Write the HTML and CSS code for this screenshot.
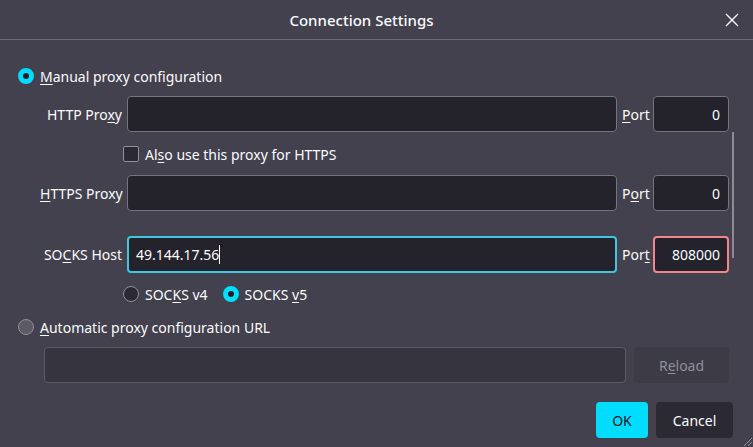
FILE: index.html
```html
<!DOCTYPE html>
<html lang="en">
<head>
    <meta charset="UTF-8">
    <title>Connection Settings</title>
    <link rel="stylesheet" href="styles.css">
</head>
<body>
    <div class="dialog">
        <header class="dialog-header">
            <div class="dialog-title">Connection Settings</div>
            <button class="close-btn" aria-label="Close">
                <svg width="14" height="14" viewBox="0 0 14 14">
                    <path d="M1 1 L13 13 M13 1 L1 13" stroke="#fbfbfe" stroke-width="1.4" fill="none"/>
                </svg>
            </button>
        </header>

        <main class="content">
            <label class="radio-row manual">
                <span class="radio checked"></span>
                <span><u>M</u>anual proxy configuration</span>
            </label>

            <div class="proxy-row http">
                <span class="field-label">HTTP Pro<u>x</u>y</span>
                <div class="field"></div>
                <span class="port-label"><u>P</u>ort</span>
                <div class="field port">0</div>
            </div>

            <label class="check-row">
                <span class="checkbox"></span>
                <span>Al<u>s</u>o use this proxy for HTTPS</span>
            </label>

            <div class="proxy-row https">
                <span class="field-label"><u>H</u>TTPS Proxy</span>
                <div class="field"></div>
                <span class="port-label">P<u>o</u>rt</span>
                <div class="field port">0</div>
            </div>

            <div class="proxy-row socks">
                <span class="field-label">SO<u>C</u>KS Host</span>
                <div class="field focused"><span>49.144.17.56</span><span class="caret"></span></div>
                <span class="port-label">Por<u>t</u></span>
                <div class="field port invalid">808000</div>
            </div>

            <div class="version-row">
                <label class="radio-row">
                    <span class="radio"></span>
                    <span>SOC<u>K</u>S v4</span>
                </label>
                <label class="radio-row">
                    <span class="radio checked"></span>
                    <span>SOCKS <u>v</u>5</span>
                </label>
            </div>

            <label class="radio-row auto">
                <span class="radio hover"></span>
                <span><u>A</u>utomatic proxy configuration URL</span>
            </label>

            <div class="url-row">
                <div class="field disabled"></div>
                <button class="btn reload">R<u>e</u>load</button>
            </div>

            <div class="dialog-buttons">
                <button class="btn primary">OK</button>
                <button class="btn">Cancel</button>
            </div>
        </main>

        <div class="scroll-thumb"></div>
        <svg class="resizer" width="12" height="12" viewBox="0 0 12 12">
            <path d="M11 3 L3 11 M11 7 L7 11" stroke="#8f8f9d" stroke-width="1" fill="none"/>
        </svg>
    </div>
</body>
</html>
```

FILE: styles.css
```css
body {
    margin: 0;
    background-color: #42414d;
    color: #fbfbfe;
    font-family: "Noto Sans", "Open Sans", sans-serif;
    font-size: 14px;
    overflow: hidden;
}

.dialog {
    position: relative;
    width: 753px;
    height: 447px;
}

.dialog-header {
    display: flex;
    align-items: center;
    height: 39px;
    padding: 0 6px;
    border-bottom: 1px solid #6b6a76;
}

.dialog-title {
    flex: 1;
    text-align: center;
    font-size: 15px;
    font-weight: 500;
}

.close-btn {
    width: 30px;
    height: 30px;
    display: flex;
    align-items: center;
    justify-content: center;
    background: none;
    border: none;
    padding: 0;
}

.content {
    padding: 0 24px 0 18px;
}

u {
    text-underline-offset: 2px;
}

.radio-row {
    display: flex;
    align-items: center;
    gap: 6px;
    height: 20px;
}

.radio-row.manual {
    margin-top: 26px;
}

.radio {
    width: 16px;
    height: 16px;
    box-sizing: border-box;
    border-radius: 50%;
    background-color: #2b2a33;
    border: 1px solid #8f8f9d;
}

.radio.checked {
    background-color: #1c1b22;
    border: 5px solid #00ddff;
}

.radio.hover {
    background-color: #5b5a65;
}

.proxy-row {
    display: grid;
    grid-template-columns: 82px 1fr 26px 76px;
    column-gap: 5px;
    align-items: center;
    margin-left: 22px;
    height: 36px;
}

.proxy-row.http {
    margin-top: 10px;
}

.proxy-row.https {
    margin-top: 11px;
}

.proxy-row.socks {
    margin-top: 25px;
}

.field-label {
    text-align: right;
    white-space: nowrap;
}

.port-label {
    white-space: nowrap;
    margin-right: -1px;
}

.field {
    box-sizing: border-box;
    height: 36px;
    display: flex;
    align-items: center;
    padding: 0 8px;
    background-color: #24232b;
    border: 1px solid #75747f;
    border-radius: 4px;
}

.field.port {
    justify-content: flex-end;
}

.field.focused {
    border: 2px solid #3cc8e4;
    padding-left: 7px;
    height: 37px;
}

.field.invalid {
    border: 2px solid #ee868c;
    padding-right: 7px;
    height: 37px;
}

.caret {
    width: 1px;
    height: 19px;
    background-color: #fbfbfe;
}

.field.disabled {
    flex: 1;
    background-color: #35343f;
    border-color: #5a5964;
}

.check-row {
    display: flex;
    align-items: center;
    gap: 6px;
    height: 20px;
    margin-top: 12px;
    padding-left: 105px;
}

.checkbox {
    width: 16px;
    height: 16px;
    box-sizing: border-box;
    background-color: #2b2a33;
    border: 1px solid #8f8f9d;
    border-radius: 2px;
}

.version-row {
    display: flex;
    gap: 15px;
    margin-top: 12px;
    padding-left: 105px;
}

.radio-row.auto {
    margin-top: 13px;
}

.url-row {
    display: flex;
    gap: 8px;
    margin-top: 10px;
    margin-left: 26px;
    height: 36px;
}

.btn {
    font-family: inherit;
    font-size: 14px;
    color: #fbfbfe;
    background-color: #2b2a33;
    border: none;
    border-radius: 4px;
    height: 36px;
    padding: 0 16px;
}

.btn.reload {
    width: 95px;
    background-color: #3c3b46;
    color: #8f8f9d;
}

.dialog-buttons {
    display: flex;
    justify-content: flex-end;
    gap: 8px;
    margin-top: 19px;
    margin-right: -4px;
}

.btn.primary {
    width: 52px;
    padding: 0;
    background-color: #00ddff;
    color: #15141a;
}

.dialog-buttons .btn:last-child {
    width: 77px;
    padding: 0;
}

.scroll-thumb {
    position: absolute;
    left: 732px;
    top: 132px;
    width: 2px;
    height: 126px;
    background-color: #8c8b96;
}

.resizer {
    position: absolute;
    right: 0;
    bottom: 0;
}
```
